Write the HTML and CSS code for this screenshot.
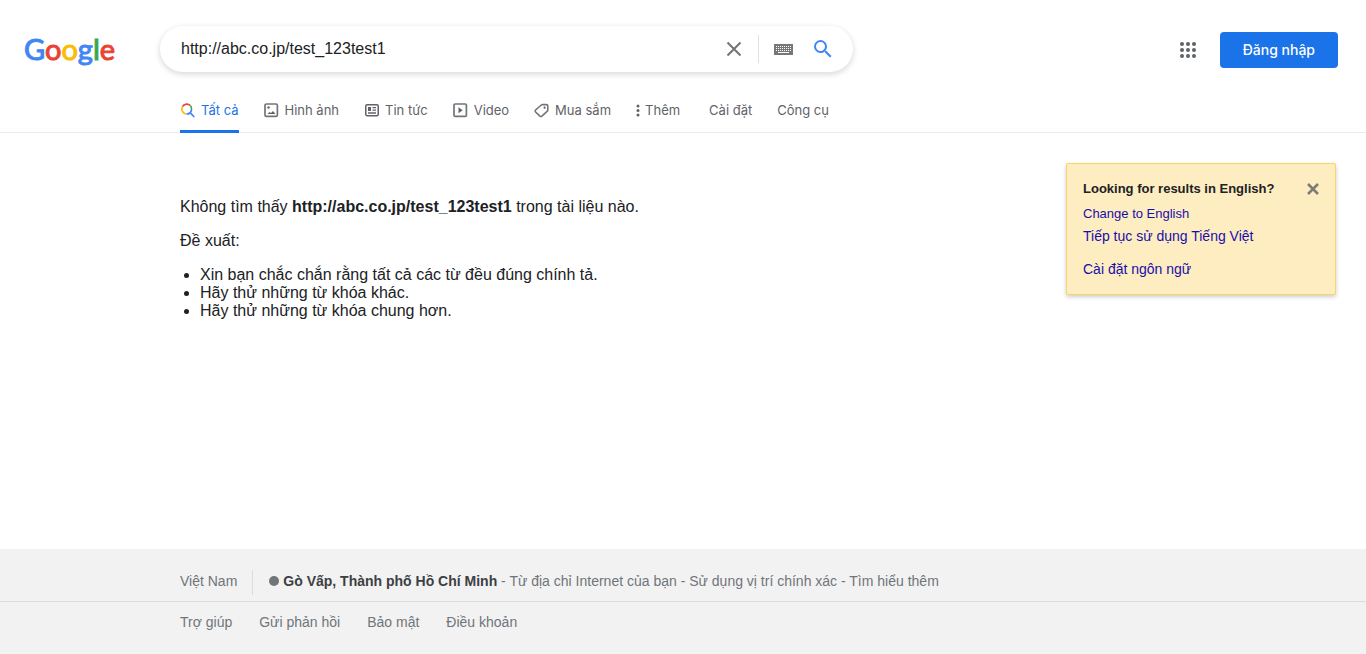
FILE: index.html
```html
<!DOCTYPE html>
<html lang="vi">
<head>
<meta charset="utf-8">
<meta name="viewport" content="width=device-width, initial-scale=1">
<title>http://abc.co.jp/test_123test1 - Google</title>
<link rel="stylesheet" href="styles.css">
</head>
<body>
<header class="header">
  <div class="topbar">
    <a class="logo" href="#" aria-label="Google"><span class="blue">G</span><span class="red">o</span><span class="yellow">o</span><span class="blue">g</span><span class="green">l</span><span class="red">e</span></a>
    <form class="search" role="search">
      <input class="search-input" type="text" aria-label="Tìm kiếm" value="http://abc.co.jp/test_123test1" spellcheck="false">
      <button class="icon-button clear" type="button" aria-label="Xóa">
        <svg width="24" height="24" viewBox="0 0 24 24"><path d="M5.500 5.500l13 13M18.500 5.500l-13 13" stroke="#70757a" stroke-width="2" fill="none"/></svg>
      </button>
      <span class="divider"></span>
      <button class="icon-button keyboard" type="button" aria-label="Bàn phím">
        <svg width="19" height="11" viewBox="0 0 19 11" shape-rendering="crispEdges"><rect width="19" height="11" fill="#777"/><path d="M2 2.500h15M2 4.500h15M2 6.500h15" stroke="#fff" stroke-dasharray="1 1"/><path d="M4 8.500h11" stroke="#fff"/></svg>
      </button>
      <button class="icon-button submit" type="submit" aria-label="Tìm">
        <svg width="24" height="24" viewBox="0 0 24 24" fill="#4285f4"><path d="M15.500 14h-.790l-.280-.270A6.471 6.471 0 0 0 16 9.500 6.500 6.500 0 1 0 9.500 16c1.610 0 3.090-.590 4.230-1.570l.270.280v.790l5 4.990L20.490 19l-4.990-5zm-6 0C7.010 14 5 11.990 5 9.500S7.010 5 9.500 5 14 7.010 14 9.500 11.990 14 9.500 14z"/></svg>
      </button>
    </form>
    <div class="account">
      <button class="icon-button apps" type="button" aria-label="Các ứng dụng của Google">
        <svg width="16" height="16" viewBox="0 0 16 16" fill="#5f6368"><circle cx="2" cy="2" r="2"/><circle cx="8" cy="2" r="2"/><circle cx="14" cy="2" r="2"/><circle cx="2" cy="8" r="2"/><circle cx="8" cy="8" r="2"/><circle cx="14" cy="8" r="2"/><circle cx="2" cy="14" r="2"/><circle cx="8" cy="14" r="2"/><circle cx="14" cy="14" r="2"/></svg>
      </button>
      <a class="signin" href="#">Đăng nhập</a>
    </div>
  </div>
  <nav class="tabs">
    <a class="tab active" href="#"><svg width="16" height="16" viewBox="0 0 16 16" fill="none" stroke-width="1.700"><path d="M2.500 4.500A5 5 0 0 1 10.300 3.500" stroke="#ea4335"/><path d="M10.300 3.500A5 5 0 0 1 11.500 8" stroke="#34a853"/><path d="M2.500 4.500A5 5 0 0 0 6.500 12" stroke="#fbbc04"/><path d="M6.500 12A5 5 0 0 0 11.500 8M10 10.700l4.300 4.300" stroke="#4285f4"/></svg>Tất cả</a>
    <a class="tab" href="#"><svg width="16" height="16" viewBox="0 0 16 16"><rect x="1" y="2" width="12.400" height="12.400" rx="1.500" fill="none" stroke="#70757a" stroke-width="1.700"/><circle cx="4.500" cy="5.500" r="1.200" fill="#5f6368"/><path d="M3.500 12l2-2 1.500 1 2-2L11.500 12z" fill="#5f6368"/></svg>Hình ảnh</a>
    <a class="tab" href="#"><svg width="16" height="16" viewBox="0 0 16 16" fill="none" stroke="#5f6368" stroke-width="1.500"><rect x="1.750" y="2.750" width="12.500" height="11" rx="1.500"/><path d="M4 5h3v4H4z" fill="#5f6368" stroke="none"/><path d="M8.500 5.700H12M8.500 8.200H12M4 11h8" stroke-width="1.300"/></svg>Tin tức</a>
    <a class="tab" href="#"><svg width="16" height="16" viewBox="0 0 16 16"><rect x="1" y="2" width="12.400" height="12.400" rx="1.200" fill="none" stroke="#70757a" stroke-width="1.700"/><path d="M5.500 5.200v6l4.200-3z" fill="#5f6368"/></svg>Video</a>
    <a class="tab" href="#"><svg width="16" height="16" viewBox="0 0 16 16"><path d="M8.400 2.600h3.900q1.500 0 1.500 1.500V8q0 .600-.500 1.100L7.900 14.100q-1 .800-2 0L1.600 10q-.800-1 0-2l5.700-5q.500-.400 1.100-.400z" fill="none" stroke="#70757a" stroke-width="1.600"/><circle cx="10.600" cy="5.700" r="1.100" fill="#5f6368"/></svg>Mua sắm</a>
    <button class="tab" type="button"><svg width="4" height="16" viewBox="0 0 4 16" fill="#5f6368"><circle cx="2" cy="4" r="1.500"/><circle cx="2" cy="8.500" r="1.500"/><circle cx="2" cy="13" r="1.500"/></svg>Thêm</button>
    <div class="tools">
      <button class="tab" type="button">Cài đặt</button>
      <button class="tab" type="button">Công cụ</button>
    </div>
  </nav>
</header>

<main class="main">
  <section class="results">
    <p>Không tìm thấy <b>http://abc.co.jp/test_123test1</b> trong tài liệu nào.</p>
    <p>Đề xuất:</p>
    <ul>
      <li>Xin bạn chắc chắn rằng tất cả các từ đều đúng chính tả.</li>
      <li>Hãy thử những từ khóa khác.</li>
      <li>Hãy thử những từ khóa chung hơn.</li>
    </ul>
  </section>
  <aside class="language">
    <div class="language-head">
      <h2>Looking for results in English?</h2>
      <button class="icon-button" type="button" aria-label="Đóng"><svg width="12" height="12" viewBox="0 0 12 12"><path d="M1 1l10 10M11 1L1 11" stroke="#7d7b76" stroke-width="2.500"/></svg></button>
    </div>
    <a class="small" href="#">Change to English</a>
    <a href="#">Tiếp tục sử dụng Tiếng Việt</a>
    <a class="settings" href="#">Cài đặt ngôn ngữ</a>
  </aside>
</main>

<footer class="footer">
  <div class="location">
    <span class="country">Việt Nam</span>
    <div class="place"><span class="dot"></span><b>Gò Vấp, Thành phố Hồ Chí Minh</b><span> - <a href="#">Từ địa chỉ Internet của bạn</a> - <a href="#">Sử dụng vị trí chính xác</a> - <a href="#">Tìm hiểu thêm</a></span></div>
  </div>
  <nav class="footer-links">
    <a href="#">Trợ giúp</a>
    <a href="#">Gửi phản hồi</a>
    <a href="#">Bảo mật</a>
    <a href="#">Điều khoản</a>
  </nav>
</footer>
</body>
</html>
```
FILE: styles.css
```css
* { box-sizing: border-box; }

body {
  margin: 0;
  min-height: 100vh;
  display: flex;
  flex-direction: column;
  background: #fff;
  color: #202124;
  font: 14px/18px "Liberation Sans", Arial, sans-serif;
}

a { color: inherit; text-decoration: none; }

button {
  padding: 0;
  border: 0;
  background: none;
  font: inherit;
  color: inherit;
  cursor: pointer;
}

.icon-button { display: flex; }

.header { border-bottom: 1px solid #ebebeb; }

.topbar {
  display: flex;
  align-items: center;
  padding: 26px 28px 0 24px;
}

.logo {
  flex: 0 0 136px;
  font: 29px/44px Lato, sans-serif;
  -webkit-text-stroke: 1px;
}
.blue { color: #4285f4; }
.red { color: #ea4335; }
.yellow { color: #fbbc05; }
.green { color: #34a853; }

.search {
  flex: 0 1 693px;
  display: flex;
  align-items: center;
  height: 46px;
  padding: 0 18px 0 21px;
  border-radius: 24px;
  background: #fff;
  box-shadow: 0 2px 5px 1px rgba(64, 60, 67, 0.16);
}
.search-input {
  flex: 1;
  min-width: 0;
  padding: 0;
  border: 0;
  outline: 0;
  background: none;
  color: #202124;
  font: 16px/34px "Liberation Sans", Arial, sans-serif;
}
.divider {
  width: 1px;
  height: 28px;
  margin: 0 15px 0 12px;
  background: #dfe1e5;
}
.submit { margin-left: 18px; }

.account {
  margin-left: auto;
  padding-top: 2px;
  display: flex;
  align-items: center;
  gap: 24px;
}
.signin {
  padding: 0 23px;
  border-radius: 4px;
  background: #1a73e8;
  color: #fff;
  font: 500 14px/36px Inter, sans-serif;
}

.tabs {
  display: flex;
  gap: 25px;
  margin: 17px 0 -1px 180px;
  color: #5f6368;
  font: 13px/20px Inter, sans-serif;
}
.tab {
  display: flex;
  align-items: center;
  gap: 5px;
  height: 44px;
  border-bottom: 3px solid transparent;
}
.active {
  border-color: #1a73e8;
  color: #1a73e8;
}
.tools {
  display: flex;
  gap: 25px;
  margin-left: 4px;
}

.main {
  flex: 1;
  display: flex;
  justify-content: space-between;
  align-items: flex-start;
  padding: 30px 30px 30px 180px;
}

.results {
  padding-top: 19px;
  font-size: 16px;
}
.results p { margin: 16px 0; }
.results ul { margin: 16px 0; padding-left: 20px; }

.language {
  width: 270px;
  padding: 15px 16px 13px;
  border: 1px solid #fad565;
  border-radius: 2px;
  background: #fdedc1;
  box-shadow: 0 2px 4px rgba(0, 0, 0, 0.2);
}
.language-head {
  display: flex;
  justify-content: space-between;
  align-items: center;
  padding-bottom: 3px;
}
.language h2 { margin: 0; font-size: 13px; line-height: 20px; }
.language a { display: block; line-height: 23px; color: #1a0dab; }
.language .small { font-size: 13px; }
.language .settings { margin-top: 10px; }

.footer {
  background: #f2f2f2;
  color: #70757a;
}
.location {
  display: flex;
  padding: 21px 30px 6px 180px;
  border-bottom: 1px solid #dadce0;
  line-height: 22px;
}
.country {
  padding: 0 15px 3px 0;
  margin-right: 16px;
  border-right: 1px solid #dadce0;
}
.place { white-space: pre-wrap; }
.place b { color: #3c4043; }
.dot {
  display: inline-block;
  width: 10px;
  height: 10px;
  margin-right: 4px;
  border-radius: 50%;
  background: #70757a;
}
.footer-links {
  display: flex;
  gap: 27px;
  padding: 10px 30px 22px 180px;
  line-height: 20px;
}
```
